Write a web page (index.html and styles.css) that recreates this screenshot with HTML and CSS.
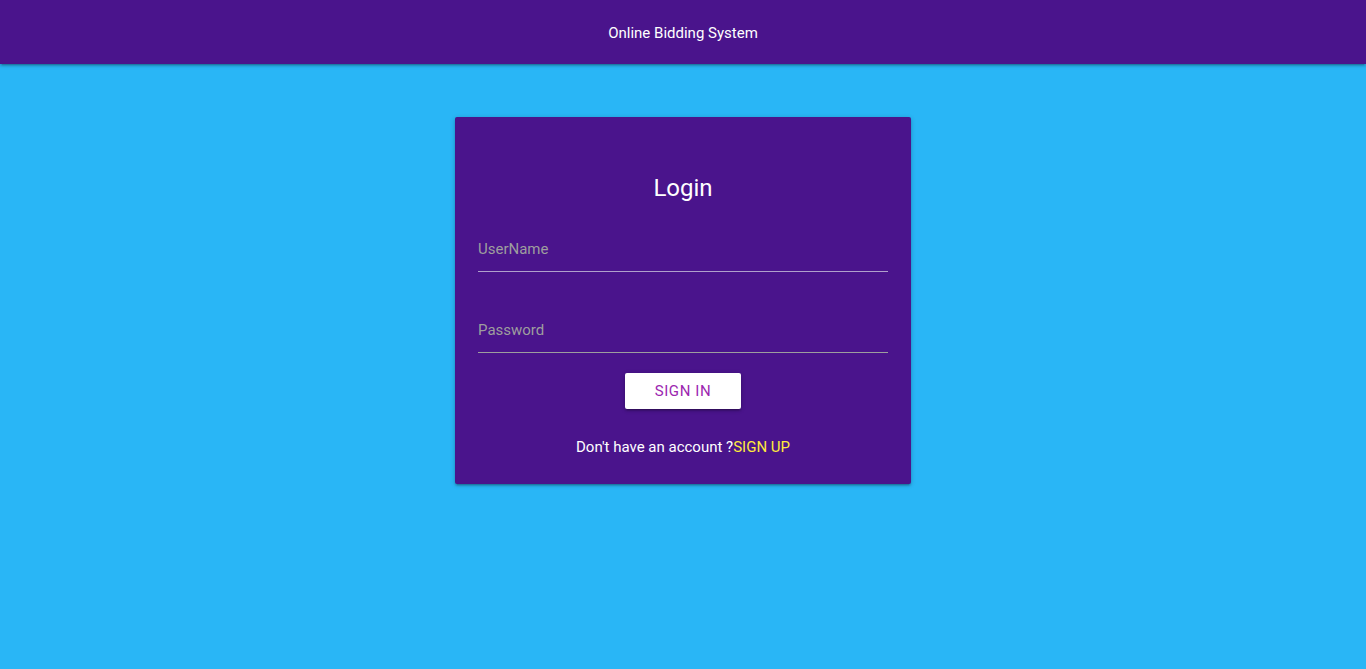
FILE: index.html
```html
<!DOCTYPE html>
<html lang="en">
<head>
<meta charset="utf-8">
<title>Online Bidding System</title>
<link rel="stylesheet" href="styles.css">
</head>
<body>
<header class="topbar">
  <span class="brand">Online Bidding System</span>
</header>
<main class="page">
  <form class="card" onsubmit="return false">
    <h1 class="card-title">Login</h1>
    <div class="field field-first">
      <input class="input" type="text" placeholder="UserName">
    </div>
    <div class="field">
      <input class="input" type="password" placeholder="Password">
    </div>
    <div class="actions">
      <button class="btn" type="submit">SIGN IN</button>
    </div>
    <p class="signup">Don't have an account ?<a class="signup-link" href="#">SIGN UP</a></p>
  </form>
</main>
</body>
</html>
```

FILE: styles.css
```css
* { box-sizing: border-box; }
html, body { margin: 0; padding: 0; }
body {
  background: #29b6f6;
  font-family: Roboto, "Liberation Sans", sans-serif;
  min-height: 100vh;
}
.topbar {
  height: 64px;
  background: #4a148c;
  display: flex;
  align-items: center;
  justify-content: center;
  box-shadow: 0 2px 2px 0 rgba(0,0,0,0.14), 0 3px 1px -2px rgba(0,0,0,0.12), 0 1px 5px 0 rgba(0,0,0,0.2);
  position: relative;
  z-index: 1;
}
.brand {
  color: #fff;
  font-size: 15px;
  line-height: 20px;
  padding-top: 2px;
}
.page {
  display: flex;
  justify-content: center;
  padding-top: 53px;
}
.card {
  width: 456px;
  background: #4a148c;
  border-radius: 2px;
  padding: 55px 23px 27px;
  box-shadow: 0 2px 2px 0 rgba(0,0,0,0.14), 0 3px 1px -2px rgba(0,0,0,0.12), 0 1px 5px 0 rgba(0,0,0,0.2);
  display: flex;
  flex-direction: column;
}
.card-title {
  margin: 0;
  color: #fff;
  font-size: 24px;
  line-height: 32px;
  font-weight: 400;
  text-align: center;
}
.field { margin-top: 36px; }
.field-first { margin-top: 23px; }
.input {
  display: block;
  width: 100%;
  height: 45px;
  background: transparent;
  border: none;
  border-bottom: 1px solid #9e9e9e;
  outline: none;
  color: #fff;
  font-family: Roboto, "Liberation Sans", sans-serif;
  font-size: 15px;
  padding: 0;
}
.field-first .input { border-bottom-color: #b0a0cc; }
.input::placeholder { color: #9e9e9e; }
.actions {
  display: flex;
  justify-content: center;
  margin-top: 20px;
}
.btn {
  width: 116px;
  height: 36px;
  background: #fff;
  color: #9c27b0;
  border: none;
  border-radius: 2px;
  font-family: Roboto, "Liberation Sans", sans-serif;
  font-size: 15px;
  letter-spacing: 0.6px;
  box-shadow: 0 2px 2px 0 rgba(0,0,0,0.14), 0 3px 1px -2px rgba(0,0,0,0.12), 0 1px 5px 0 rgba(0,0,0,0.2);
  cursor: pointer;
}
.signup {
  margin: 28px 0 0;
  text-align: center;
  color: #fff;
  font-size: 15px;
  line-height: 20px;
}
.signup-link {
  color: #ffeb3b;
  text-decoration: none;
}
```
